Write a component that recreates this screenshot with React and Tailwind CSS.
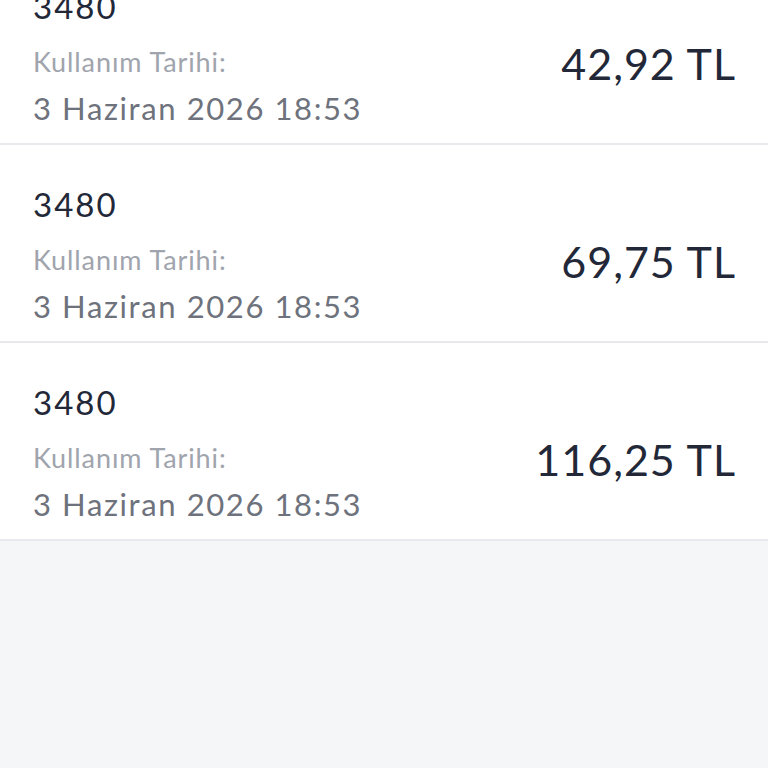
const items = [
  { code: "3480", date: "3 Haziran 2026 18:53", amount: "42,92 TL" },
  { code: "3480", date: "3 Haziran 2026 18:53", amount: "69,75 TL" },
  { code: "3480", date: "3 Haziran 2026 18:53", amount: "116,25 TL" },
];

const UsageRow = ({ item }) => (
  <div className="flex h-[198px] items-start justify-between border-b-2 border-[#e8e9ec] bg-white px-[33px] pt-[39px]">
    <div className="flex flex-col">
      <span className="text-[33px] leading-[40px] tracking-[2px] text-[#222838]">{item.code}</span>
      <span className="mt-[20px] text-[27px] leading-[32px] tracking-[0.9px] text-[#a0a4ad]">Kullanım Tarihi:</span>
      <span className="mt-[11px] text-[31px] leading-[38px] tracking-[1.6px] text-[#6e727c]">{item.date}</span>
    </div>
    <span className="mt-[53px] mr-[-1px] text-[43px] leading-[50px] tracking-[1px] text-[#222838]">{item.amount}</span>
  </div>
);

export default function App() {
  return (
    <div className="h-[768px] overflow-hidden bg-[#f5f6f8] font-['Lato',sans-serif]">
      <div className="-mt-[53px]">
        {items.map((item, i) => (
          <UsageRow key={i} item={item} />
        ))}
      </div>
    </div>
  );
}
